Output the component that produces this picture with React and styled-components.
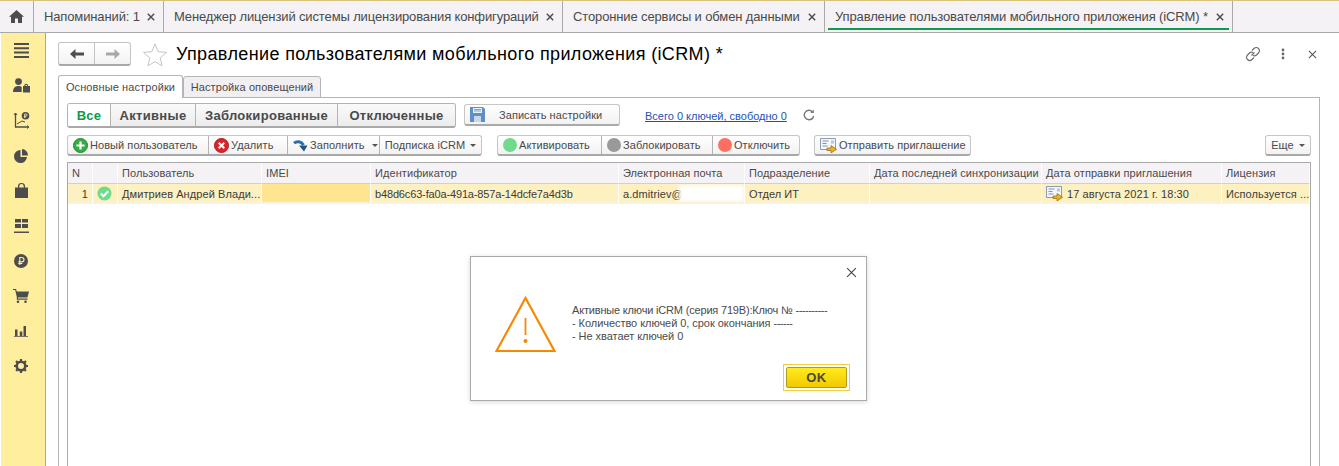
import React from 'react'
import styled, { createGlobalStyle } from 'styled-components'

const Global = createGlobalStyle`
  html, body { margin: 0; padding: 0; background: #fff; overflow: hidden; }
  * { box-sizing: border-box; }
  body { font-family: "Liberation Sans", Arial, sans-serif; font-size: 11px; color: #4b4b4b; }
`

const Page = styled.div`
  position: relative;
  width: 1339px;
  height: 466px;
  overflow: hidden;
  display: flex;
  flex-direction: column;
`

const TabStrip = styled.div`
  height: 33px;
  flex: none;
  display: flex;
  background: #f5f2f5;
  border-top: 1px solid #d9c27a;
  border-bottom: 1px solid #a9a9a9;
`

const HomeTab = styled.div`
  width: 34px;
  display: flex;
  align-items: center;
  justify-content: center;
  border-right: 1px solid #a9a9a9;
`

const OpenTab = styled.div`
  position: relative;
  width: ${p => p.$w}px;
  display: flex;
  align-items: center;
  padding-left: 10px;
  padding-bottom: 1px;
  font-size: 13px;
  letter-spacing: -0.13px;
  color: #4a4a4a;
  white-space: nowrap;
  border-right: 1px solid #a9a9a9;

  ${p => p.$active && `
    &::after {
      content: '';
      position: absolute;
      left: 3px;
      right: 3px;
      bottom: 2px;
      height: 2px;
      background: #0c9a4c;
    }
  `}
`

const TabClose = styled.svg`
  position: absolute;
  right: 8px;
  top: 12px;
`

const Body = styled.div`
  flex: 1;
  display: flex;
  min-height: 0;
`

const Sidebar = styled.div`
  width: 45px;
  flex: none;
  margin-left: 1px;
  background: #feee9e;
  border-right: 1px solid #b5aa6e;
  display: flex;
  flex-direction: column;
  align-items: center;
  padding-right: 4px;
`

const SideIcon = styled.div`
  width: 24px;
  height: 35px;
  flex: none;
  display: flex;
  align-items: center;
  justify-content: center;
`

const Content = styled.div`
  flex: 1;
  min-width: 0;
  padding: 8px 19px 0 12px;
  display: flex;
  flex-direction: column;
`

const TitleRow = styled.div`
  height: 26px;
  flex: none;
  display: flex;
  align-items: center;
  margin-bottom: 8px;
`

const NavGroup = styled.div`
  width: 73px;
  height: 24px;
  display: flex;
  background: linear-gradient(#fff, #f3f3f3);
  border: 1px solid #c4c4c4;
  border-bottom: 2px solid #a9a9a9;
  border-radius: 3px;
`

const NavBtn = styled.div`
  flex: 1;
  display: flex;
  align-items: center;
  justify-content: center;
  & + & { border-left: 1px solid #c4c4c4; }
`

const Star = styled.svg`
  margin: 0 9px 0 12px;
`

const Title = styled.h1`
  margin: 0;
  font-size: 18px;
  font-weight: 400;
  letter-spacing: 0.37px;
  color: #000;
  white-space: nowrap;
`

const TitleTools = styled.div`
  margin-left: auto;
  width: 72px;
  margin-right: 3px;
  display: flex;
  align-items: center;
  justify-content: space-between;
`

const MoreDots = styled.svg`
  margin-right: 4px;
`

const FormTabs = styled.div`
  height: 23px;
  flex: none;
  display: flex;
  align-items: flex-end;
  margin-bottom: -1px;
  position: relative;
  z-index: 1;
`

const FormTab = styled.div`
  width: ${p => p.$w}px;
  height: ${p => (p.$on ? 23 : 22)}px;
  display: flex;
  align-items: center;
  justify-content: center;
  background: ${p => (p.$on ? '#fff' : '#f1eff1')};
  border: 1px solid #b4b4b4;
  border-bottom: ${p => (p.$on ? 'none' : '1px solid #b4b4b4')};
  border-radius: 3px 3px 0 0;
  font-size: 11px;
  letter-spacing: 0.1px;
  color: #4a4a4a;
  white-space: nowrap;
`

const Panel = styled.div`
  flex: 1;
  min-height: 0;
  border: 1px solid #b4b4b4;
  border-bottom: none;
  padding: 5px 8px 0;
  display: flex;
  flex-direction: column;
`

const FilterRow = styled.div`
  height: 26px;
  flex: none;
  display: flex;
  align-items: flex-start;
  margin-bottom: 6px;
`

const FilterGroup = styled.div`
  width: 389px;
  height: 25px;
  display: flex;
  border: 1px solid #b4b4b4;
  border-bottom: 2px solid #a9a9a9;
  border-radius: 3px;
  overflow: hidden;
`

const FilterBtn = styled.div`
  width: ${p => p.$w}px;
  display: flex;
  align-items: center;
  justify-content: center;
  font-size: 13px;
  font-weight: 700;
  letter-spacing: 0.3px;
  color: ${p => (p.$on ? '#0c9a4c' : '#4a4a4a')};
  background: ${p => (p.$on ? '#fff' : 'linear-gradient(#fafafa, #ececec)')};
  border-right: ${p => (p.$last ? 'none' : '1px solid #b4b4b4')};
`

const ToolGroup = styled.div`
  height: 21px;
  display: flex;
  flex: none;
  background: linear-gradient(#fff, #f2f2f2);
  border: 1px solid #c6c6c6;
  border-bottom: 2px solid #a9a9a9;
  border-radius: 3px;
  margin-left: ${p => p.$gap || 0}px;
`

const SaveGroup = styled(ToolGroup)`
  height: 22px;
  margin-top: 1px;
`

const ToolBtn = styled.div`
  width: ${p => p.$w}px;
  display: flex;
  align-items: center;
  justify-content: ${p => (p.$center ? 'center' : 'flex-start')};
  gap: ${p => (p.$gap === undefined ? 2 : p.$gap)}px;
  padding-left: ${p => (p.$center ? 0 : 5)}px;
  font-size: 11px;
  letter-spacing: 0.06px;
  color: #4a4a4a;
  white-space: nowrap;
  & + & { border-left: 1px solid #b4b4b4; }
`

const Caret = styled.span`
  width: 0;
  height: 0;
  margin-left: 5px;
  border-left: 3px solid transparent;
  border-right: 3px solid transparent;
  border-top: 3px solid #555;
`

const Dot = styled.span`
  width: 14px;
  height: 14px;
  flex: none;
  border-radius: 50%;
  background: ${p => p.$c};
`

const KeysLink = styled.a`
  margin: 7px 0 0 25px;
  font-size: 11px;
  color: #1c52b8;
  text-decoration: underline;
  white-space: nowrap;
`

const Refresh = styled.svg`
  margin: 6px 0 0 16px;
`

const ToolRow = styled.div`
  height: 21px;
  flex: none;
  display: flex;
  margin-bottom: 6px;
`

const Spacer = styled.div`
  flex: 1;
`

const Table = styled.div`
  flex: 1;
  min-height: 0;
  border: 1px solid #a9a9a9;
  border-bottom: none;
`

const Row = styled.div`
  display: grid;
  grid-template-columns: 25px 25px 144px 109px 248px 126px 125px 172px 180px 1fr;
  height: ${p => p.$h}px;
`

const HeadCell = styled.div`
  display: flex;
  align-items: center;
  padding-left: 4px;
  background: #f5f2f5;
  border-right: 1px solid #fff;
  border-bottom: 1px solid #d0d0d0;
  font-size: 11px;
  letter-spacing: 0.08px;
  color: #4a4a4a;
  white-space: nowrap;
  overflow: hidden;
`

const Cell = styled.div`
  position: relative;
  display: flex;
  align-items: center;
  justify-content: ${p => (p.$right ? 'flex-end' : 'flex-start')};
  padding: ${p => (p.$right ? '1px 4px 0 0' : '1px 0 0 4px')};
  gap: 3px;
  background: ${p => (p.$hi ? '#ffe58f' : '#fdf0c1')};
  border-right: 1px solid #fff;
  border-bottom: 2px solid #faf3dc;
  font-size: 11px;
  letter-spacing: ${p => (p.$tight ? -0.15 : 0.08)}px;
  color: #3c3c3c;
  white-space: nowrap;
  overflow: hidden;
`

const Redacted = styled.span`
  position: absolute;
  left: 60px;
  top: 1px;
  width: 65px;
  height: 17px;
  background: #fff;
  filter: blur(2px);
`

const Dialog = styled.div`
  position: absolute;
  left: 470px;
  top: 256px;
  width: 397px;
  height: 145px;
  background: #fff;
  border: 1px solid #a9a9a9;
  box-shadow: 0 1px 5px rgba(0, 0, 0, 0.16);
  padding: 39px 0 0 24px;
`

const DialogClose = styled.svg`
  position: absolute;
  right: 9px;
  top: 10px;
`

const DialogMain = styled.div`
  display: flex;
  align-items: flex-start;
`

const Message = styled.div`
  margin: 8px 0 0 16px;
  font-size: 11px;
  line-height: 13px;
  letter-spacing: -0.05px;
  color: #4a4a4a;
  white-space: pre;
`

const KeyLine = styled.span`
  letter-spacing: -0.18px;
`

const Dashes = styled.span`
  letter-spacing: -0.5px;
`

const OkFrame = styled.div`
  position: absolute;
  right: 16px;
  bottom: 9px;
  padding: 2px;
  border: 1px solid #f2cf3a;
`

const OkBtn = styled.div`
  width: 61px;
  height: 21px;
  display: flex;
  align-items: center;
  justify-content: center;
  background: linear-gradient(#ffec1e, #f2c800);
  border: 1px solid #b39a18;
  border-radius: 2px;
  font-size: 13px;
  font-weight: 700;
  letter-spacing: 0.4px;
  color: #4a4a3a;
`

const Cross = ({ s = 9, w = 1.8, c = '#4d4d4d', as: As = 'svg' }) => (
  <As width={s} height={s} viewBox="0 0 10 10" fill="none" stroke={c} strokeWidth={w}>
    <path d="M1 1l8 8M9 1l-8 8" />
  </As>
)

const ic = '#4d4d4d'

const sideIcons = [
  <svg width="15" height="15" viewBox="0 0 15 15" fill={ic} key="menu"><path d="M0 0h15v2H0zM0 4.300h15v2H0zM0 8.600h15v2H0zM0 13h15v2H0z" /></svg>,
  <svg width="17" height="16" viewBox="0 0 17 16" fill={ic} key="user"><circle cx="5.500" cy="3.600" r="3.400" /><path d="M0 14c0-4 2-6 5.500-6 1.600 0 2.600.5 3.200 1v5z" /><path d="M10 14.500V8h1.200c.2-1.600 1-2.300 2-2.300s1.800.7 2 2.300H17v6.500zm2.300-6.500h1.900c-.1-.8-.4-1.100-.9-1.100s-.9.3-1 1.100z" fillRule="evenodd" /></svg>,
  <svg width="17" height="17" viewBox="0 0 17 17" fill="none" stroke={ic} key="chart"><path d="M2.500 1v14h13" strokeWidth="1.300" /><path d="M1 3l1.500-2L4 3M14 13.500l2 1.500-2 1.500" strokeWidth="1" /><path d="M4 12l5-3 3 1" strokeWidth="1" /><circle cx="12.500" cy="3.800" r="3.800" fill={ic} stroke="none" /><path d="M11.700 6V2h1.400a1 1 0 010 2h-2M10.800 5h2.200" stroke="#feee9e" strokeWidth=".8" /></svg>,
  <svg width="14" height="14" viewBox="0 0 14 14" fill={ic} key="pie"><path d="M6.500 1a6.500 6.500 0 106.500 7H6.500z" /><path d="M8 0v6.500h6A6.500 6.500 0 008 0z" /></svg>,
  <svg width="13" height="15" viewBox="0 0 13 15" fill={ic} key="bag"><path d="M0 4.500h3V3.300a3.500 3.300 0 017 0v1.200h3V15H0zM4.300 4.500h4.400V3.300a2.200 2.200 0 00-4.400 0z" fillRule="evenodd" /></svg>,
  <svg width="15" height="14" viewBox="0 0 15 14" fill={ic} key="grid"><path d="M1 0h6v3.500H1zM8 0h6v3.500H8zM1 5h6v4H1zM8 5h6v4H8zM0 12.500h15V14H0z" /></svg>,
  <svg width="14" height="14" viewBox="0 0 14 14" key="rub"><circle cx="7" cy="7" r="7" fill={ic} /><path d="M5.800 11V3.500h2a2.100 2.100 0 010 4.300H4.300M4.300 9.400h4" fill="none" stroke="#feee9e" strokeWidth="1.100" /></svg>,
  <svg width="16" height="14" viewBox="0 0 16 14" fill={ic} key="cart"><path d="M0 0h3l.8 2.500H16l-1.500 6H5v1h9.500v1.200H3.800V8L2.200 1.100H0z" /><circle cx="5" cy="12.700" r="1.300" /><circle cx="12.500" cy="12.700" r="1.300" /></svg>,
  <svg width="14" height="12" viewBox="0 0 14 12" fill={ic} key="bars"><path d="M1 4.500h2.500V11H1zM5.800 6.500h2.500V11H5.800zM9.500 1H12v10H9.500zM0 11.200h14V12H0z" /></svg>,
  <svg width="14" height="14" viewBox="0 0 14 14" key="gear"><circle cx="7" cy="7" r="4.300" fill="none" stroke={ic} strokeWidth="2.600" /><path d="M7 0v14M0 7h14M2 2l10 10M12 2L2 12" stroke={ic} strokeWidth="2.200" strokeDasharray="2.200 9.600" /></svg>,
]

const PlusIcon = () => (
  <svg width="15" height="15" viewBox="0 0 15 15"><circle cx="7.500" cy="7.500" r="7" fill="#34ad42" stroke="#1f8a30" /><path d="M7.500 3.500v8M3.500 7.500h8" stroke="#fff" strokeWidth="2.200" /></svg>
)

const DeleteIcon = () => (
  <svg width="15" height="15" viewBox="0 0 15 15"><circle cx="7.500" cy="7.500" r="7" fill="#d8242c" stroke="#b01a20" /><path d="M4.700 4.700l5.600 5.600M10.300 4.700l-5.600 5.600" stroke="#fff" strokeWidth="2" /></svg>
)

const FillIcon = () => (
  <svg width="15" height="13" viewBox="0 0 15 13" fill="none"><path d="M1 4.200C4 1.800 8 2 10.500 6" stroke="#2d6ea8" strokeWidth="3" /><path d="M6 6.500h8.500L11 12.500z" fill="#1e5488" /></svg>
)

const InviteIcon = () => (
  <svg width="18" height="15" viewBox="0 0 18 15">
    <path d="M.5.500h15v11H.500z" fill="#f4f6fa" stroke="#8b9bb0" />
    <path d="M2.500 3h6M2.500 5.500h4M2.500 8h5" stroke="#7f93ad" />
    <path d="M11 2.500h3v3h-3z" fill="#b7c6d8" />
    <path d="M7 10h4V7.500l5.500 3.800L11 15v-2.500H7z" fill="#f2b21c" stroke="#8a6410" strokeWidth=".7" />
  </svg>
)

const columns = ['N', '', 'Пользователь', 'IMEI', 'Идентификатор', 'Электронная почта', 'Подразделение', 'Дата последней синхронизации', 'Дата отправки приглашения', 'Лицензия']

export default function App() {
  return (
    <Page>
      <Global />
      <TabStrip>
        <HomeTab>
          <svg width="15" height="13" viewBox="0 0 15 13" fill={ic}><path d="M7.500 0L15 6.800h-2V13H9V8.500H6V13H2V6.800H0z" /></svg>
        </HomeTab>
        <OpenTab $w={130}>Напоминаний: 1<Cross as={TabClose} s={8} /></OpenTab>
        <OpenTab $w={399}>Менеджер лицензий системы лицензирования конфигураций<Cross as={TabClose} s={8} /></OpenTab>
        <OpenTab $w={262}>Сторонние сервисы и обмен данными<Cross as={TabClose} s={8} /></OpenTab>
        <OpenTab $w={408} $active>Управление пользователями мобильного приложения (iCRM) *<Cross as={TabClose} s={8} /></OpenTab>
      </TabStrip>
      <Body>
        <Sidebar>
          {sideIcons.map((icon, i) => <SideIcon key={i}>{icon}</SideIcon>)}
        </Sidebar>
        <Content>
          <TitleRow>
            <NavGroup>
              <NavBtn>
                <svg width="14" height="10" viewBox="0 0 14 10" fill="#4d4d4d"><path d="M0 5l5.500-5v3.500H14v3H5.500V10z" /></svg>
              </NavBtn>
              <NavBtn>
                <svg width="14" height="10" viewBox="0 0 14 10" fill="#a8a8a8"><path d="M14 5L8.500 0v3.500H0v3h8.500V10z" /></svg>
              </NavBtn>
            </NavGroup>
            <Star width="24" height="23" viewBox="0 0 24 23" fill="none" stroke="#c4c4c8"><path d="M12 1l3.200 7.700 8.300.7-6.300 5.400 1.900 8.100L12 18.600l-7.100 4.300 1.900-8.100L.5 9.400l8.300-.7z" /></Star>
            <Title>Управление пользователями мобильного приложения (iCRM) *</Title>
            <TitleTools>
              <svg width="16" height="16" viewBox="0 0 16 16" fill="none" stroke="#6a6a6a" strokeWidth="1.100"><path d="M6.500 9.500l3-3M7 4.500l2-2a3 3 0 014.500 4.500l-2 2a3 3 0 01-3.500.5M9 11.500l-2 2A3 3 0 012.500 9l2-2A3 3 0 018 6.500" /></svg>
              <MoreDots width="4" height="12" viewBox="0 0 4 12" fill="#6a6a6a"><circle cx="2" cy="2" r="1.400" /><circle cx="2" cy="6" r="1.400" /><circle cx="2" cy="10" r="1.400" /></MoreDots>
              <Cross s={9} w={1.200} c="#555" />
            </TitleTools>
          </TitleRow>
          <FormTabs>
            <FormTab $w={125} $on>Основные настройки</FormTab>
            <FormTab $w={138}>Настройка оповещений</FormTab>
          </FormTabs>
          <Panel>
            <FilterRow>
              <FilterGroup>
                <FilterBtn $w={43} $on>Все</FilterBtn>
                <FilterBtn $w={85}>Активные</FilterBtn>
                <FilterBtn $w={142}>Заблокированные</FilterBtn>
                <FilterBtn $w={117} $last>Отключенные</FilterBtn>
              </FilterGroup>
              <SaveGroup $gap={8}>
                <ToolBtn $w={154} $gap={14}>
                  <svg width="15" height="15" viewBox="0 0 15 15"><path d="M0 0h13l2 2v13H0z" fill="#5f8fc8" /><path d="M3 1h9v5H3z" fill="#eef3fa" /><path d="M4 9h7v6H4z" fill="#c8d8ea" /><path d="M4 2.500h7M4 4h7" stroke="#7ea2cc" /></svg>
                  Записать настройки
                </ToolBtn>
              </SaveGroup>
              <KeysLink>Всего 0 ключей, свободно 0</KeysLink>
              <Refresh width="12" height="12" viewBox="0 0 12 12" fill="none" stroke="#777" strokeWidth="1.400"><path d="M10 3.500A4.700 4.700 0 106 10.700a4.700 4.700 0 004.600-3.700" /><path d="M10.800.500v3.500H7.300" fill="#777" stroke="none" /></Refresh>
            </FilterRow>
            <ToolRow>
              <ToolGroup>
                <ToolBtn $w={140}><PlusIcon />Новый пользователь</ToolBtn>
                <ToolBtn $w={79}><DeleteIcon />Удалить</ToolBtn>
                <ToolBtn $w={92}><FillIcon />Заполнить<Caret /></ToolBtn>
                <ToolBtn $w={102} $center $gap={0}>Подписка iCRM<Caret /></ToolBtn>
              </ToolGroup>
              <ToolGroup $gap={15}>
                <ToolBtn $w={103}><Dot $c="#6fdc8c" />Активировать</ToolBtn>
                <ToolBtn $w={111}><Dot $c="#999" />Заблокировать</ToolBtn>
                <ToolBtn $w={87}><Dot $c="#ff6f61" />Отключить</ToolBtn>
              </ToolGroup>
              <ToolGroup $gap={14}>
                <ToolBtn $w={155} $gap={1}><InviteIcon />Отправить приглашение</ToolBtn>
              </ToolGroup>
              <Spacer />
              <ToolGroup>
                <ToolBtn $w={44} $center $gap={0}>Еще<Caret /></ToolBtn>
              </ToolGroup>
            </ToolRow>
            <Table>
              <Row $h={21}>
                {columns.map((c, i) => <HeadCell key={i}>{c}</HeadCell>)}
              </Row>
              <Row $h={20}>
                <Cell $right>1</Cell>
                <Cell>
                  <svg width="15" height="15" viewBox="0 0 15 15"><circle cx="7.500" cy="7.500" r="7" fill="#6fdc8c" /><path d="M3.800 7.500l2.700 2.700 4.700-5" fill="none" stroke="#fff" strokeWidth="2" /></svg>
                </Cell>
                <Cell>Дмитриев Андрей Влади...</Cell>
                <Cell $hi />
                <Cell $tight>b48d6c63-fa0a-491a-857a-14dcfe7a4d3b</Cell>
                <Cell>a.dmitriev@<Redacted /></Cell>
                <Cell>Отдел ИТ</Cell>
                <Cell />
                <Cell><InviteIcon />17 августа 2021 г. 18:30</Cell>
                <Cell>Используется ...</Cell>
              </Row>
            </Table>
          </Panel>
        </Content>
      </Body>
      <Dialog>
        <Cross as={DialogClose} s={11} w={1} c="#444" />
        <DialogMain>
          <svg width="61" height="56" viewBox="0 0 61 56" fill="none" stroke="#f58a00" strokeWidth="2.200"><path d="M30.500 2L1.500 55h58z" /><path d="M30.500 22v17" strokeWidth="1.800" /><circle cx="30.500" cy="45" r="2" fill="#f58a00" stroke="none" /></svg>
          <Message><KeyLine>Активные ключи iCRM (серия 719B):Ключ № </KeyLine><Dashes>----------</Dashes>{'\n'}- Количество ключей 0, срок окончания <Dashes>------</Dashes>{'\n'}- Не хватает ключей 0</Message>
        </DialogMain>
        <OkFrame><OkBtn>OK</OkBtn></OkFrame>
      </Dialog>
    </Page>
  )
}
